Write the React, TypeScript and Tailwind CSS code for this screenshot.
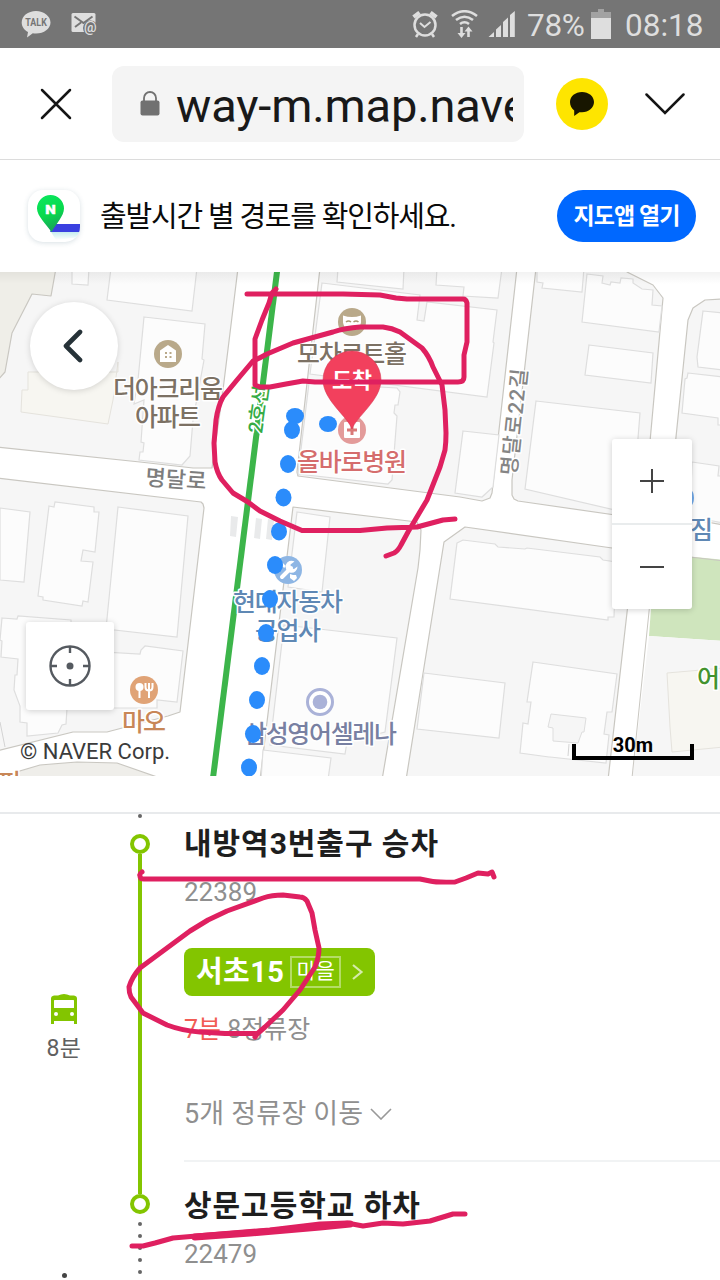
import React from "react";

const buildings = [
  "72,268 72,284 88,285 89,268",
  "111,268 107,300 192,311 197,268",
  "144,317 205,324 202,359 204,360 193,420 190,456 182,465 139,460 140,452 143,452 144,443 141,442 144,400 134,404 138,380",
  "0,508 30,512 24,582 0,580",
  "49,506 54,507 55,502 94,507 94,512 99,512 95,552 83,550 81,561 93,562 88,602 83,601 82,606 43,600 43,597 38,596",
  "118,507 188,516 177,637 106,629",
  "2,618 17,619 18,616 71,620 71,650 140,654 141,650 145,646 183,651 177,702 157,700 157,708 67,708 66,724 62,725 58,733 27,736 27,723 20,722 20,706 14,690 15,675 17,675 18,659 1,657 2,641 0,640",
  "338,268 337,282 403,289 404,268",
  "437,268 436,285 464,287 463,296 498,298 502,268",
  "322,283 420,295 417,320 424,321 427,302 497,310 493,342 494,343 487,397 310,374",
  "309,383 397,388 400,392 398,405 395,405 394,413 397,416 392,480 388,484 298,474",
  "463,431 499,435 493,487 482,497 455,493",
  "537,268 537,282 543,283 542,288 582,292 584,268",
  "587,274 603,276 602,283 610,285 611,282 620,283 621,278 633,279 633,283 642,289 653,290 652,305 662,306 659,332 582,322",
  "589,345 653,353 651,383 585,375",
  "536,401 640,413 632,514 525,489",
  "703,311 724,313 724,370 698,367 697,357",
  "688,373 724,377 724,425 718,425 718,418 682,413 685,379 687,378",
  "692,462 719,466 718,476 724,476 724,523 713,521 690,518",
  "457,543 463,540 495,544 498,547 525,549 527,548 600,557 603,560 616,562 614,617 608,617 608,620 450,599",
  "424,673 505,683 499,738 417,729",
  "533,662 617,674 612,712 607,712 604,734 609,735 606,763 550,757 549,757 520,753 523,723 528,724 531,702 527,702",
  "297,512 330,517 322,592 288,587",
  "284,625 397,638 385,732 347,742 345,754 270,745",
  "263,750 331,758 328,780 261,780",
];

const blocks = [
  "-4,268 238,268 222,398 212,468 193,468 140,462 -4,447",
  "-4,478 201,502 203,504 204,508 180,712 168,716 107,732 73,732 -4,751",
  "320,268 297,472 298,476 460,497 482,501 490,498 492,493 517,268",
  "536,268 512,480 512,495 514,499 518,501 643,519 663,298 653,285 627,272 627,268",
  "724,299 705,300 693,308 688,320 668,515 724,525",
  "465,527 612,548 634,551 608,780 406,780 444,542",
  "293,507 417,522 421,530 420,550 418,568 382,780 260,780",
];

const dots = [
  [295, 416], [292, 430], [328, 424], [288, 464], [283.5, 497.5], [279, 531.5],
  [275, 565], [270, 599], [266, 633], [262, 666], [257, 700], [253, 734], [249, 767.5],
];

type LabelProps = {
  x: number;
  y: number;
  w?: number;
  size?: number;
  color: string;
  rotate?: number;
  children: string;
};

function Label({ x, y, w, size = 25, color, rotate = 0, children }: LabelProps) {
  return (
    <text
      x={x}
      y={y}
      fontSize={size}
      fill={color}
      stroke="#ffffff"
      strokeWidth={3}
      strokeLinejoin="round"
      paintOrder="stroke"
      textLength={w}
      lengthAdjust="spacing"
      fontWeight={500}
      transform={rotate ? `rotate(${rotate} ${x} ${y})` : undefined}
    >
      {children}
    </text>
  );
}

function StatusBar() {
  return (
    <header className="flex h-12 items-center bg-[#757575] pl-[21px] pr-4 text-[#dedede]">
      <svg className="h-7 w-[30px]" viewBox="0 0 30 28">
        <path d="M15 1C7 1 .7 6 .7 12.500c0 4.300 2.500 7.500 6.300 9.600L6 27.500l5.800-4.200c1 .2 2 .2 3.200.2 8 0 14.500-4.800 14.500-11S23 1 15 1Z" fill="#dedede" />
        <text x="4.300" y="16" fontSize="10" fontWeight="700" fill="#757575" textLength="21.500" lengthAdjust="spacingAndGlyphs">TALK</text>
      </svg>
      <svg className="ml-5 h-7 w-7" viewBox="71 10 28 28">
        <rect x="71.500" y="13" width="24" height="19" rx="1.500" fill="#dedede" />
        <path d="m74.500 16.500 9 6.500 9-6.500M75 27l6-4.500" fill="none" stroke="#757575" strokeWidth="2" />
        <circle cx="90.500" cy="28" r="7.500" fill="#757575" />
        <text x="84" y="32" fontSize="14" fontWeight="600" fill="#dedede">@</text>
      </svg>
      <svg className="ml-auto h-7 w-[26px]" viewBox="411 10 26 28" fill="none" stroke="#dedede">
        <circle cx="424" cy="25" r="10.500" strokeWidth="2.500" />
        <path d="m419 23 4.500 4 6-5" strokeWidth="2" />
        <path d="m412.500 17 6-4.500M435.500 17l-6-4.500" strokeWidth="4" />
        <path d="m417 34-2 3M431 34l2 3" strokeWidth="2.500" />
      </svg>
      <svg className="ml-[13px] h-7 w-7" viewBox="450 10 28 28" fill="none" stroke="#dedede" strokeWidth="2.600">
        <path d="M451 16q12.500-9.500 25 0M455 20q8.500-6.500 17 0M459 24q4.500-3.500 9 0" />
        <path d="M460.500 27v7M467.500 37v-7" />
        <path d="m456.500 33 4 5 4-5ZM463.500 31.500l4-5 4 5Z" fill="#dedede" stroke="none" />
      </svg>
      <svg className="ml-[9px] h-7 w-7" viewBox="487 10 28 28" fill="#dedede">
        <path d="M487.500 37 493 32v5ZM495 29.500l5-4.500v12h-5ZM502 22l5-4.500V37h-5ZM509 15l4.800-4v26H509Z" />
      </svg>
      <span className="ml-[11px] w-[59px] whitespace-nowrap pt-[3px] text-[31.500px] leading-none tracking-[-0.300px]">78%</span>
      <svg className="ml-[5px] h-[30px] w-5" viewBox="0 0 20 30">
        <path d="M0 3h7V0h6v3h7v6H0Z" fill="#a2a2a2" />
        <path d="M0 9h20v21H0Z" fill="#dedede" />
      </svg>
      <span className="ml-[14px] w-[79px] whitespace-nowrap pt-[3px] text-[31.500px] leading-none tracking-[0px]">08:18</span>
    </header>
  );
}

function AddressBar() {
  return (
    <nav className="flex h-28 items-center border-b border-[#dcdcdc] pl-10 pr-[34px]">
      <svg className="h-8 w-8 shrink-0" viewBox="0 0 32 32" fill="none" stroke="#151515" strokeWidth="2.500" strokeLinecap="round">
        <path d="m2 2 28 28M30 2 2 30" />
      </svg>
      <div className="ml-10 flex h-[76px] w-[412px] items-center rounded-xl bg-[#f4f4f4] pl-7">
        <svg className="h-[26px] w-5 shrink-0" viewBox="0 0 20 26">
          <path d="M4 10V7a6 6 0 0 1 12 0v3" fill="none" stroke="#717171" strokeWidth="1.800" />
          <rect x=".5" y="9.500" width="19" height="15" rx="2" fill="#717171" />
        </svg>
        <div className="ml-4 w-[337px] overflow-hidden whitespace-nowrap pt-1 text-[47px] leading-[60px] tracking-[-0.150px] text-[#191919]">
          way-m.map.nave
        </div>
      </div>
      <div className="ml-8 flex size-[52px] items-center justify-center rounded-full bg-[#fee500]">
        <svg className="h-6 w-6" viewBox="0 0 24 24">
          <path d="M12 0C5.400 0 0 4.300 0 10c0 3.700 1.500 6.500 4.200 8.400V24l5.200-3.800c.8.100 1.700.1 2.600.1 6.600 0 12-4.500 12-10.300S18.600 0 12 0Z" fill="#181600" />
        </svg>
      </div>
      <svg className="ml-auto mr-px h-[22px] w-10" viewBox="0 0 40 22" fill="none" stroke="#151515" strokeWidth="2.500" strokeLinecap="round">
        <path d="m1.500 1.500 18.500 18.500 18.500-18.500" />
      </svg>
    </nav>
  );
}

function AppBanner() {
  return (
    <section className="flex h-28 items-center pl-7 pr-6">
      <div className="size-[52px] overflow-hidden rounded-[15px] bg-white shadow-[0_1px_5px_rgba(60,100,120,0.2)]">
        <svg className="size-full" viewBox="0 0 52 52">
          <defs>
            <linearGradient id="pin" x1="0" y1="0" x2="0.300" y2="1">
              <stop offset="0" stopColor="#0be860" />
              <stop offset="0.600" stopColor="#08d94c" />
              <stop offset="1" stopColor="#19a65a" />
            </linearGradient>
            <linearGradient id="fade" x1="0" y1="0" x2="0" y2="1">
              <stop offset="0" stopColor="#c5ecef" />
              <stop offset="1" stopColor="#ffffff" />
            </linearGradient>
          </defs>
          <path d="M23 42h29v5l-24 3Z" fill="url(#fade)" />
          <path d="M26 34h26v8H22Z" fill="#3a40e0" />
          <path d="M22.500 5A13.500 13.500 0 0 0 9 18.500C9 26 18 34 23.500 42 28 34 36 26 36 18.500A13.500 13.500 0 0 0 22.500 5Z" fill="url(#pin)" />
          <text x="17.300" y="23.500" fontSize="13" fontWeight="900" fill="#fff" stroke="#fff" strokeWidth=".4" textLength="10.500" lengthAdjust="spacingAndGlyphs">N</text>
        </svg>
      </div>
      <p className="ml-5 whitespace-nowrap pt-0.5 text-[29px] leading-10 tracking-[-1.200px] text-[#0a0a0a]">출발시간 별 경로를 확인하세요.</p>
      <button className="ml-auto h-[52px] w-[139px] whitespace-nowrap rounded-full bg-[#0068ff] pt-0.5 text-[23px] font-bold tracking-[-0.900px] text-white">지도앱 열기</button>
    </section>
  );
}

function MapDrawing() {
  return (
    <svg className="block size-full" viewBox="0 272 720 504">
      <defs>
        <linearGradient id="edge" x1="0" y1="0" x2="0" y2="1">
          <stop offset="0" stopColor="#000" stopOpacity=".05" />
          <stop offset="1" stopColor="#000" stopOpacity="0" />
        </linearGradient>
      </defs>
      <rect y="272" width="720" height="504" fill="#ffffff" />
      <g fill="#f6f6f6" stroke="#c9c7c1" strokeWidth="1.200" strokeLinejoin="round">
        {blocks.map((p) => <polygon key={p} points={p} />)}
        <polygon points="-4,778 40,765 77,762 117,763 160,778" fill="#efeeea" />
        <polygon points="-4,268 56,268 51,296 32,294 12,333 5,372 -4,382" fill="#efeee8" />
      </g>
      <polygon points="655,553 724,560 724,641 649,636" fill="#cfe5bd" />
      <polygon points="649,636 724,641 724,780 632,780" fill="#f6f6f6" />
      <path d="M655 553 632 778M655 553l69 8" fill="none" stroke="#c9c7c1" />
      <g fill="#fcfcfc" stroke="#dedede" strokeWidth="1.200">
        {buildings.map((p) => <polygon key={p} points={p} />)}
      </g>
      <polygon points="551,714 586,718 584,732 582,732 578,743 553,741 553,728 548,727" fill="#f6f6f6" stroke="#dedede" />
      <path d="m569 744-1 12M0 722l5 25" fill="none" stroke="#d4d4d4" />
      <polygon points="28,372 118,372 118,362 113,400 108,424 21,412 22,390 28,390" fill="#f7f6f1" stroke="#e5e3dd" />
      <polygon points="667,673 724,668 724,747 672,752 670,727" fill="#f7f6f1" stroke="#e5e3dd" />
      <path d="m231 516 7 1-2 20-6-1ZM256 518l6 1-2 20-6-1ZM268 519l6 1-2 20-6-1Z" fill="#e9eaeb" />
      <path d="M277.500 268 213 778" stroke="#3cb54a" strokeWidth="6" />

      <Label x={145} y={485} w={61} size={22} color="#7d7d7d" rotate={4}>명달로</Label>
      <Label x={516} y={476} w={107} size={21} color="#858585" rotate={-84}>명달로22길</Label>
      <Label x={262} y={434} w={48} size={20} color="#35ab45" rotate={-82}>2호선</Label>
      <Label x={113} y={398} w={110} color="#7c7164">더아크리움</Label>
      <Label x={135} y={426} w={66} color="#7c7164">아파트</Label>
      <Label x={297} y={363} w={110} color="#7c7164">모차르트홀</Label>
      <Label x={297} y={471} w={110} color="#d56d6d">올바로병원</Label>
      <Label x={233} y={611} w={110} color="#5f88b4">현대자동차</Label>
      <Label x={255} y={640} w={66} color="#5f88b4">공업사</Label>
      <Label x={244} y={743} w={153} color="#7880a2">삼성영어셀레나</Label>
      <Label x={122} y={731} w={44} color="#c88757">마오</Label>
      <Label x={690} y={539} color="#5f88b4">짐</Label>
      <Label x={697} y={687} color="#43932f">어</Label>
      <Label x={-2} y={792} color="#c88757">피</Label>
      <circle cx="680" cy="498" r="14" fill="#6fa8e8" />

      <circle cx="168" cy="354" r="14" fill="#b9a98a" />
      <path d="m168 345 8 5.500V362h-16v-11.500Z" fill="#fff" />
      <path d="M165 353h2M169.500 353h2M165 357h2M169.500 357h2" stroke="#b9a98a" strokeWidth="1.800" />
      <circle cx="352" cy="322" r="14" fill="#b9a98a" />
      <path d="M343 315.500q9 3 18 0v7q-1 5-4 7h-10q-3-2-4-7Z" fill="#fff" />
      <path d="M346 322q2.500-2 5 0M353.500 322q2.500-2 5 0" fill="none" stroke="#a99873" strokeWidth="1.600" />
      <circle cx="352" cy="430" r="14" fill="#e39b9a" />
      <rect x="344" y="422" width="16" height="16" rx="1" fill="#fff" />
      <path d="M352 425v10M347 430h10" stroke="#d97978" strokeWidth="3" />
      <circle cx="288" cy="570" r="14" fill="#8eb6e4" />
      <path d="m282 577 9-9" stroke="#fff" strokeWidth="4" strokeLinecap="round" />
      <path d="M294.500 561.500a6 6 0 1 0 3 5l-3.500 2.500-3-1-.5-3.500Z" fill="#fff" />
      <path d="m281 563 4 4" stroke="#fff" strokeWidth="2.500" />
      <path d="m290 574 3 1 3 0 1 3-3 3-4-3Z" fill="#fff" />
      <circle cx="144" cy="690" r="14" fill="#e0a376" />
      <circle cx="139.500" cy="687" r="4" fill="#fff" />
      <path d="M139.500 689v9M149 690v8M145.500 683v4q0 3.500 3.500 3.500t3.500-3.500v-4M149 683v7" fill="none" stroke="#fff" strokeWidth="2" />
      <circle cx="320" cy="702" r="12.500" fill="#fff" stroke="#aab2d8" strokeWidth="3" />
      <circle cx="320" cy="702" r="7.300" fill="#aab2d8" />

      {dots.map(([x, y]) => <ellipse key={y} cx={x} cy={y} rx={y === 416 || y === 424 ? 9 : 8} ry={y === 416 || y === 424 ? 8 : 9} fill="#2b8cfb" />)}
      <path d="M352 429C348 417 323 400 323 380a29 29 0 1 1 58 0c0 20-25 37-29 49Z" fill="#f2405d" stroke="#d93450" strokeWidth=".6" />
      <text x="332" y="388" fontSize="22" fontWeight="700" fill="#fff" textLength="40">도착</text>
      <rect y="272" width="720" height="12" fill="url(#edge)" />
    </svg>
  );
}

function MapView() {
  return (
    <section className="relative h-[504px] overflow-hidden">
      <MapDrawing />
      <button className="absolute left-[30px] top-[30px] flex size-[88px] items-center justify-center rounded-full bg-white shadow-[0_1px_6px_rgba(0,0,0,0.15)]">
        <svg className="mr-[3px] h-9 w-5" viewBox="0 0 20 36" fill="none" stroke="#263238" strokeWidth="4.600" strokeLinecap="round" strokeLinejoin="round">
          <path d="M17 4 3 18l14 14" />
        </svg>
      </button>
      <button className="absolute left-[26px] top-[350px] flex size-[88px] items-center justify-center rounded-[3px] bg-white shadow-[0_1px_6px_rgba(0,0,0,0.18)]">
        <svg className="size-[42px]" viewBox="0 0 42 42" fill="none" stroke="#555a60" strokeWidth="2.400">
          <circle cx="21" cy="21" r="19.500" />
          <path d="M21 2v6M21 34v6M2 21h6M34 21h6" />
          <circle cx="21" cy="21" r="3.500" fill="#555a60" stroke="none" />
        </svg>
      </button>
      <div className="absolute left-[612px] top-[167px] flex h-[170px] w-20 flex-col divide-y-2 divide-[#e9eced] rounded-[3px] bg-white shadow-[0_1px_6px_rgba(0,0,0,0.18)]">
        <button className="flex flex-1 items-center justify-center">
          <svg className="size-6" viewBox="0 0 24 24" stroke="#444" strokeWidth="2"><path d="M12 0v24M0 12h24" /></svg>
        </button>
        <button className="flex flex-1 items-center justify-center">
          <svg className="size-6" viewBox="0 0 24 24" stroke="#444" strokeWidth="2"><path d="M0 12h24" /></svg>
        </button>
      </div>
      <span className="absolute left-[20px] top-[468px] whitespace-nowrap text-[22px] leading-6 text-[#3b3b3b]">© NAVER Corp.</span>
      <div className="absolute left-[572px] top-[472px] h-4 w-[122px] border-4 border-t-0 border-black" />
      <span className="absolute left-[572px] top-[461px] w-[122px] text-center text-[20px] font-bold leading-6 text-black">30m</span>
    </section>
  );
}

function Stop() {
  return <span className="block size-5 shrink-0 rounded-full border-4 border-[#83c500] bg-white" />;
}

function RouteDetail() {
  return (
    <section className="flex h-[504px] flex-col overflow-hidden">
      <div className="h-[38px] shrink-0 border-b-2 border-[#e8eaec]" />
      <div className="flex flex-1">
        <div className="flex w-32 flex-col items-center pt-[180px]">
          <svg className="h-[30px] w-[26px]" viewBox="0 0 26 30">
            <path d="M3 1.500H7Q13-1.500 19 1.500h4q3 .5 3 3V30h-3v-3H3v3H0V4.500q0-2.500 3-3Z" fill="#83c500" />
            <rect x="3" y="6" width="20" height="8" rx=".5" fill="#fff" />
            <circle cx="5" cy="20" r="2" fill="#fff" />
            <circle cx="21" cy="20" r="2" fill="#fff" />
          </svg>
          <span className="mt-[9px] text-[23px] leading-8 tracking-[0.400px] text-[#606060]">8분</span>
          <span className="mt-[208px] size-[5px] rounded-full bg-[#444]" />
        </div>
        <div className="flex w-6 shrink-0 flex-col items-center">
          <span className="mb-4 size-1 shrink-0 rounded-full bg-[#666]" />
          <Stop />
          <span className="h-[340px] w-1 shrink-0 bg-[#83c500]" />
          <Stop />
          <div className="mt-2 flex flex-col gap-2">
            {[0, 1, 2, 3, 4].map((n) => <span key={n} className="size-1 rounded-full bg-[#666]" />)}
          </div>
        </div>
        <div className="ml-8 flex flex-1 flex-col whitespace-nowrap text-[#8f8f8f]">
          <h2 className="h-[58px] pt-px text-[30px] font-bold leading-[58px] tracking-[0.950px] text-[#1e1e1e]">내방역3번출구 승차</h2>
          <p className="h-[76px] text-[26px] leading-10">22389</p>
          <div className="flex h-12 w-[191px] shrink-0 items-center rounded-lg bg-[#83c500] pl-3 text-white">
            <span className="w-[89px] text-[29px] font-bold leading-10 tracking-[0.400px]">서초15</span>
            <span className="ml-[5px] flex h-8 w-[51px] items-center justify-center border-2 border-[#b4dc66] text-[21px] tracking-[-0.500px]">마을</span>
            <svg className="ml-[11px] h-4 w-3" viewBox="0 0 12 16" fill="none" stroke="#d5ebaa" strokeWidth="2.200"><path d="m1 1 8.500 7L1 15" /></svg>
          </div>
          <p className="mt-3.5 h-11 text-[25px] leading-10"><span className="text-[#f25c54]">7분</span> 8정류장</p>
          <div className="mt-9 flex h-11 items-center pt-1 text-[27px] tracking-[0.200px]">
            <span>5개 정류장 이동</span>
            <svg className="ml-[7px] h-3 w-[22px]" viewBox="0 0 22 12" fill="none" stroke="#999" strokeWidth="1.600"><path d="m1 1 10 10L21 1" /></svg>
          </div>
          <div className="mt-[26px] border-b-2 border-[#f1f3f4]" />
          <h2 className="mt-[14px] h-[58px] pt-px text-[30px] font-bold leading-[58px] tracking-[0.950px] text-[#1e1e1e]">상문고등학교 하차</h2>
          <p className="text-[26px] leading-10">22479</p>
        </div>
      </div>
    </section>
  );
}

function PenMarks() {
  return (
    <svg className="pointer-events-none absolute left-0 top-0 h-[1280px] w-[720px]" viewBox="0 0 720 1280" fill="none" stroke="#df2060" strokeWidth="5" strokeLinecap="round" strokeLinejoin="round">
      <path d="M276 289 272 293 269 303 262 320 255 339V385L260 387 270 387 286 384 303 381 315 382H458Q464 382 464 377V355L467 342V303Q466 299 463 299H407L396 298 380 295 343 294H247" />
      <path d="M455 519 443 520 417 527 387 528 360 530.500H302L280 521 260 511 248 502 233 493 222 480Q217 473 215 462L214 443 216 420Q218 406 223 397L237 380 253 361Q260 358 267 354L293 343 333 332Q345 328 360 327L383 327Q392 328 400 332L422 348Q429 356 433 367L442 385 445 410 446 433Q446 443 445 450L440 467 427 500 408 532 401 545Q398 551 394 553L386 556" />
      <path d="M142 872Q139 874 140 876 140 879 144 879H420L430 881Q436 882.500 455 882L466 878 478 873 488 874 492 872 494 877" />
      <path d="M255 1037 257 1034 265 1027 283 1010 300 990 315 967Q319 957 319 948L315 930 312 913 307 901Q304 897 300 897L283 895Q272 895 263 898L227 911 208 920 190 931 167 948 140 968Q132 977 129 987 129 993 131 997L143 1013 167 1025Q183 1031 200 1032L225 1033.500H255" />
      <path d="M132 1246H143L155 1243 173 1238 220 1234 270 1230 320 1224 347 1223 363 1226 383 1223 403 1224 430 1221 453 1214H465" />
      <path d="M195 1237 250 1233 320 1227 350 1224" strokeWidth="7" />
    </svg>
  );
}

export default function App() {
  return (
    <main className="relative h-[1280px] w-[720px] overflow-hidden bg-white font-[Roboto,'Noto_Sans_CJK_KR',sans-serif]">
      <StatusBar />
      <AddressBar />
      <AppBanner />
      <MapView />
      <RouteDetail />
      <PenMarks />
    </main>
  );
}
